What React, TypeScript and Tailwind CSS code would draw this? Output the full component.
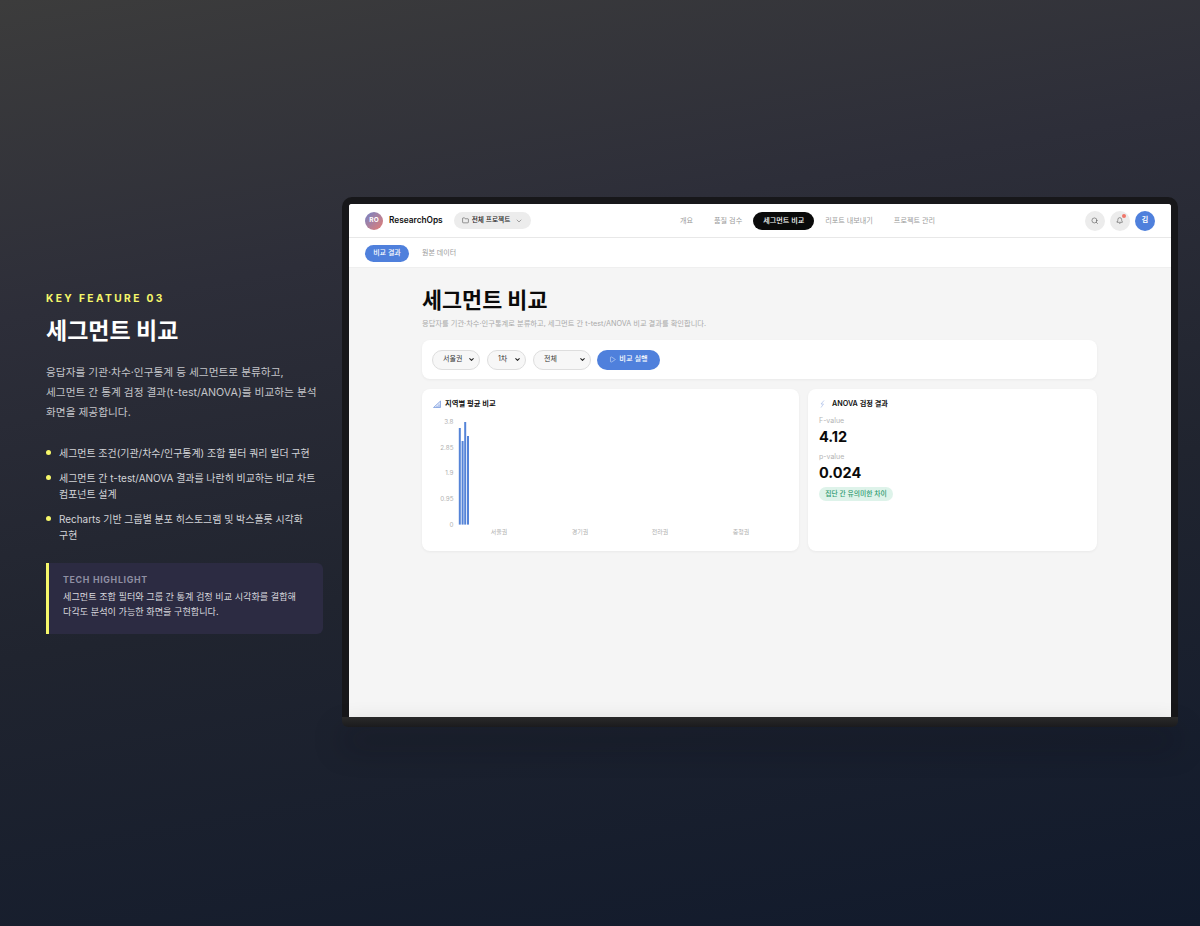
import { ChevronDown, Folder, Search, Bell, Play } from 'lucide-react';

const FONT = "font-['Inter','Noto_Sans_CJK_KR',sans-serif]";

const bullets = [
    ['세그먼트 조건(기관/차수/인구통계) 조합 필터 쿼리 빌더 구현'],
    ['세그먼트 간 t-test/ANOVA 결과를 나란히 비교하는 비교 차트', '컴포넌트 설계'],
    ['Recharts 기반 그룹별 분포 히스토그램 및 박스플롯 시각화', '구현'],
];

const navItems = ['개요', '품질 검수', '세그먼트 비교', '리포트 내보내기', '프로젝트 관리'];

function FeaturePanel() {
    return (
        <div className="w-[296px] shrink-0 ml-[46px] mb-[2px]">
            <div className="text-[10.2px] leading-[14px] font-bold tracking-[2.4px] text-[#f6f76a]">KEY FEATURE 03</div>
            <h1 className="mt-[10px] text-[23px] leading-[32px] font-bold text-white">세그먼트 비교</h1>
            <p className="mt-[16px] text-[10.7px] leading-[20px] text-[#c4c5c9] whitespace-nowrap">
                응답자를 기관·차수·인구통계 등 세그먼트로 분류하고,
                <br />
                세그먼트 간 통계 검정 결과(t-test/ANOVA)를 비교하는 분석
                <br />
                화면을 제공합니다.
            </p>
            <ul className="mt-[22px] flex flex-col gap-[9px]">
                {bullets.map((lines) => (
                    <li key={lines[0]} className="flex">
                        <span className="mt-[5.5px] mr-[8px] size-[5px] shrink-0 rounded-full bg-[#f6f76a]" />
                        <span className="text-[9.95px] leading-[16px] text-[#d3d4d8] whitespace-nowrap">
                            {lines.map((l) => (
                                <span key={l} className="block">{l}</span>
                            ))}
                        </span>
                    </li>
                ))}
            </ul>
            <div className="mt-[20px] w-[277px] h-[71px] border-l-[3px] border-[#f6f76a] rounded-r-[6px] bg-[#2c2b42] pl-[14px] pt-[10px]">
                <div className="text-[8.8px] leading-[13px] font-bold tracking-[0.7px] text-[#8f8fa3]">TECH HIGHLIGHT</div>
                <div className="mt-[3px] text-[9.15px] leading-[15.5px] text-[#d8d8de] whitespace-nowrap">
                    세그먼트 조합 필터와 그룹 간 통계 검정 비교 시각화를 결합해
                    <br />
                    다각도 분석이 가능한 화면을 구현합니다.
                </div>
            </div>
        </div>
    );
}

function TopNav() {
    return (
        <header className="h-[34px] shrink-0 flex items-center bg-white border-b border-[#e8e8e8] pl-[16px] pr-[16px]">
            <div className="size-[18px] rounded-full bg-gradient-to-br from-[#6f7fc4] to-[#e57a6f] flex items-center justify-center text-[6.5px] font-bold text-white">RO</div>
            <span className="ml-[6px] w-[53px] text-[8.3px] font-semibold text-[#111] whitespace-nowrap">ResearchOps</span>
            <button className="ml-[12px] h-[17px] w-[77px] rounded-full bg-[#ececec] flex items-center justify-center gap-[3px] text-[6.7px] font-medium text-[#222]">
                <Folder size={7} strokeWidth={1.5} />
                <span>전체 프로젝트</span>
                <ChevronDown size={8} strokeWidth={1.5} className="ml-[2px] text-[#555]" />
            </button>
            <nav className="ml-[139px] flex items-center gap-[1px]">
                {navItems.map((n) =>
                    n === '세그먼트 비교' ? (
                        <span key={n} className="h-[18px] w-[61px] pt-[1px] rounded-full bg-[#0a0a0a] flex items-center justify-center text-[7.1px] font-medium text-white">{n}</span>
                    ) : (
                        <span key={n} className="h-[18px] px-[10px] pt-[1px] flex items-center text-[7.1px] text-[#9a9a9a]">{n}</span>
                    )
                )}
            </nav>
            <div className="ml-auto flex items-center gap-[5px]">
                <span className="size-[20px] rounded-full bg-[#ececec] flex items-center justify-center text-[#333]">
                    <Search size={7.5} strokeWidth={1.5} />
                </span>
                <span className="relative size-[20px] rounded-full bg-[#ececec] flex items-center justify-center text-[#333]">
                    <Bell size={7.5} strokeWidth={1.5} />
                    <span className="absolute top-[3px] right-[4px] size-[4px] rounded-full bg-[#f0766a]" />
                </span>
                <span className="size-[20px] rounded-full bg-[#4f80dc] flex items-center justify-center text-[7px] font-semibold text-white">김</span>
            </div>
        </header>
    );
}

function SubNav() {
    return (
        <div className="h-[30px] shrink-0 flex items-center bg-white border-b border-[#efefef] pl-[16px] pt-[1px]">
            <span className="h-[17px] w-[44px] rounded-full bg-[#4f80dc] flex items-center justify-center text-[7px] font-medium text-white">비교 결과</span>
            <span className="ml-[13px] text-[7px] text-[#9a9a9a]">원본 데이터</span>
        </div>
    );
}

function Picker({ value, width }: { value: string; width: string }) {
    return (
        <div className={`${width} h-[20px] rounded-full border border-[#dedede] bg-[#f7f7f7] pl-[10px] pr-[4px] flex items-center justify-between text-[7px] text-[#333]`}>
            <span>{value}</span>
            <ChevronDown size={7} strokeWidth={3.5} className="text-[#222]" />
        </div>
    );
}

function RegionChart() {
    const ticks = [
        ['3.8', 421],
        ['2.85', 446.5],
        ['1.9', 472],
        ['0.95', 497.5],
        ['0', 523.5],
    ] as const;
    const bars = [
        [458.8, 427],
        [461.6, 440],
        [464.2, 421],
        [467, 435],
    ];
    const regions = [
        ['서울권', 499],
        ['경기권', 580],
        ['전라권', 660],
        ['충청권', 741],
    ] as const;
    // coordinates below use page px, the viewBox starts at the chart's origin
    return (
        <svg width="376" height="130" viewBox="422 414 376 130" className="mt-[6px]">
            {ticks.map(([t, y]) => (
                <text key={t} x="453.5" y={y + 2.3} textAnchor="end" fontSize="6.3" fill="#b0b0b0">{t}</text>
            ))}
            {bars.map(([x, y]) => (
                <rect key={x} x={x} y={y} width="2" height={523.6 - y} fill="#5584d8" />
            ))}
            {regions.map(([r, x]) => (
                <text key={r} x={x} y="533" textAnchor="middle" fontSize="6" fill="#b0b0b0">{r}</text>
            ))}
        </svg>
    );
}

function Screen() {
    return (
        <div className="w-[822px] h-[513px] flex flex-col bg-[#f5f5f5] rounded-t-[3px] overflow-hidden">
            <TopNav />
            <SubNav />
            <main className="w-[675px] ml-[73px] pt-[17px]">
                <h2 className="text-[21.8px] leading-[30px] font-bold text-[#0a0a0a]">세그먼트 비교</h2>
                <p className="mt-[3px] text-[7.25px] leading-[12px] text-[#aaaaaa]">응답자를 기관·차수·인구통계로 분류하고, 세그먼트 간 t-test/ANOVA 비교 결과를 확인합니다.</p>
                <div className="mt-[10px] h-[39px] rounded-[8px] bg-white shadow-[0_1px_3px_rgba(0,0,0,0.05)] flex items-center pl-[10px] gap-[7px]">
                    <Picker value="서울권" width="w-[48px]" />
                    <Picker value="1차" width="w-[39px]" />
                    <Picker value="전체" width="w-[58px]" />
                    <button className="ml-[-1px] h-[20px] w-[63px] rounded-full bg-[#4f80dc] flex items-center justify-center gap-[3px] text-[7.2px] font-medium text-white">
                        <Play size={7} strokeWidth={1.5} />
                        비교 실행
                    </button>
                </div>
                <div className="mt-[10px] flex gap-[9px]">
                    <section className="w-[377px] h-[162px] rounded-[8px] bg-white shadow-[0_1px_3px_rgba(0,0,0,0.05)] pt-[10px]">
                        <div className="flex items-center pl-[11px] h-[10px] text-[7.3px] font-semibold text-[#111]">
                            <svg width="8" height="8" viewBox="0 0 8 8" fill="#dfe7f8" stroke="#7f9fe0" strokeWidth="0.8" className="mr-[4px]">
                                <path d="M0.5 7.5H7.5V1L0.5 7.5Z" />
                                <path d="M4 6V7.5M6 4.5V7.5" />
                            </svg>
                            지역별 평균 비교
                        </div>
                        <RegionChart />
                    </section>
                    <section className="w-[289px] h-[162px] rounded-[8px] bg-white shadow-[0_1px_3px_rgba(0,0,0,0.05)] pt-[10px] pl-[11px]">
                        <div className="flex items-center h-[10px] text-[7.2px] font-semibold text-[#111]">
                            <svg width="7" height="8" viewBox="0 0 7 8" fill="none" stroke="#a9bde8" strokeWidth="0.7" className="mr-[6px]">
                                <path d="M5 0.5L2 4H4.5L2 7.5" />
                            </svg>
                            ANOVA 검정 결과
                        </div>
                        <div className="mt-[7px] text-[7px] leading-[10px] text-[#b4b4b4]">F-value</div>
                        <div className="mt-[1px] text-[14.5px] leading-[20px] font-bold text-[#0a0a0a]">4.12</div>
                        <div className="mt-[5px] text-[7px] leading-[10px] text-[#b4b4b4]">p-value</div>
                        <div className="mt-[1px] text-[14.5px] leading-[20px] font-bold text-[#0a0a0a]">0.024</div>
                        <span className="mt-[4px] flex h-[14px] w-[74px] items-center justify-center rounded-full bg-[#def3ea] text-[6.8px] font-medium text-[#2f9a70]">집단 간 유의미한 차이</span>
                    </section>
                </div>
            </main>
        </div>
    );
}

export default function App() {
    return (
        <div className={`${FONT} w-[1200px] h-[926px] overflow-hidden flex items-center bg-[linear-gradient(170deg,#3c3c3c_0%,#2d2e39_28%,#20242f_58%,#111a2c_100%)]`}>
            <FeaturePanel />
            <div className="mb-[2px]">
                <div className="w-[836px] h-[520px] rounded-t-[10px] bg-[#17171a] pt-[7px] pl-[7px]">
                    <Screen />
                </div>
                <div className="h-[10px] w-[836px] rounded-b-[6px] bg-gradient-to-b from-[#2a2a2a] to-[#1b1b1d] shadow-[0_18px_30px_rgba(10,12,20,0.45)]" />
            </div>
        </div>
    );
}
